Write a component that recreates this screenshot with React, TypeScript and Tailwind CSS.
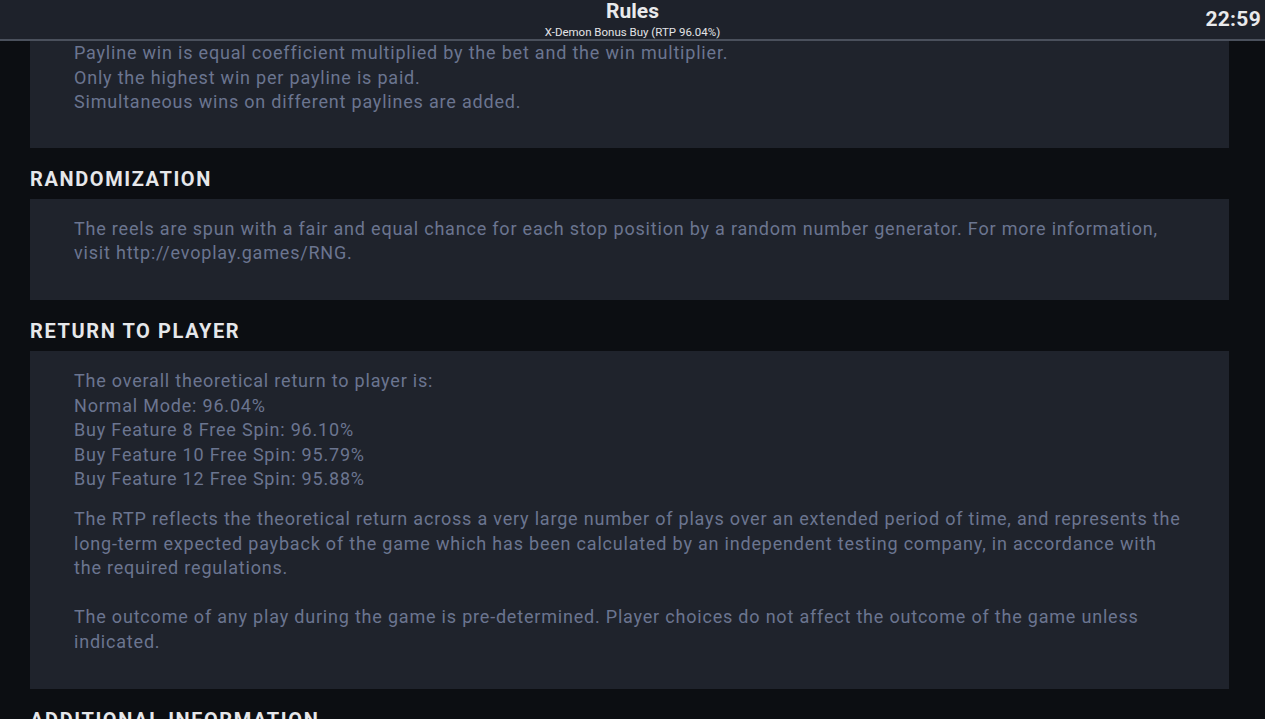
export default function App() {
  const body = "text-[18px] leading-[24.6px] text-[#6b7590] tracking-[0.8px]";
  const heading = "text-[20px] font-bold text-[#e6e7ea] leading-[24px] tracking-[1.6px] pt-[19px] pb-[8px]";

  return (
    <div className="h-[719px] w-full overflow-hidden bg-[#0c0e12] flex flex-col" style={{ fontFamily: "Roboto, 'Liberation Sans', sans-serif" }}>

      {/* HEADER */}
      <header className="relative z-10 h-[41px] shrink-0 bg-[#1e222b] border-b-2 border-[#4a505c] flex flex-col items-center">
        <h1 className="text-[21px] font-bold text-[#e9eaec] leading-[22px]">Rules</h1>
        <p className="text-[11.5px] text-[#e2e3e6] leading-[14px] mt-[3px]">X-Demon Bonus Buy (RTP 96.04%)</p>
        <span className="absolute right-[4px] top-[6px] text-[21px] font-bold text-[#e9eaec] leading-[26px] tracking-[0.3px]">22:59</span>
      </header>

      {/* CONTENT */}
      <main className="px-[30px] mr-[6px] mt-[-2px]">

        <div className="bg-[#1f232c] pl-[44px] pr-[40px] pt-[2px] pb-[18px]">
          <p className={`${body} mb-[15px]`}>
            Payline win is equal coefficient multiplied by the bet and the win multiplier.<br />
            Only the highest win per payline is paid.<br />
            Simultaneous wins on different paylines are added.
          </p>
        </div>

        <h2 className={heading}>RANDOMIZATION</h2>
        <div className="bg-[#1f232c] pl-[44px] pr-[40px] pt-[18px] pb-[19px]">
          <p className={`${body} mb-[15px]`}>
            The reels are spun with a fair and equal chance for each stop position by a random number generator. For more information, visit http://evoplay.games/RNG.
          </p>
        </div>

        <h2 className={heading}>RETURN TO PLAYER</h2>
        <div className="bg-[#1f232c] pl-[44px] pr-[40px] pt-[18px] pb-[19px]">
          <p className={`${body} mb-[15px]`}>
            The overall theoretical return to player is:<br />
            Normal Mode: 96.04%<br />
            Buy Feature 8 Free Spin: 96.10%<br />
            Buy Feature 10 Free Spin: 95.79%<br />
            Buy Feature 12 Free Spin: 95.88%
          </p>
          <p className={`${body} mb-[15px]`}>
            The RTP reflects the theoretical return across a very large number of plays over an extended period of time, and represents the long-term expected payback of the game which has been calculated by an independent testing company, in accordance with the required regulations.<br />
            <br />
            The outcome of any play during the game is pre-determined. Player choices do not affect the outcome of the game unless indicated.
          </p>
        </div>

        <h2 className={heading}>ADDITIONAL INFORMATION</h2>
      </main>
    </div>
  );
}
